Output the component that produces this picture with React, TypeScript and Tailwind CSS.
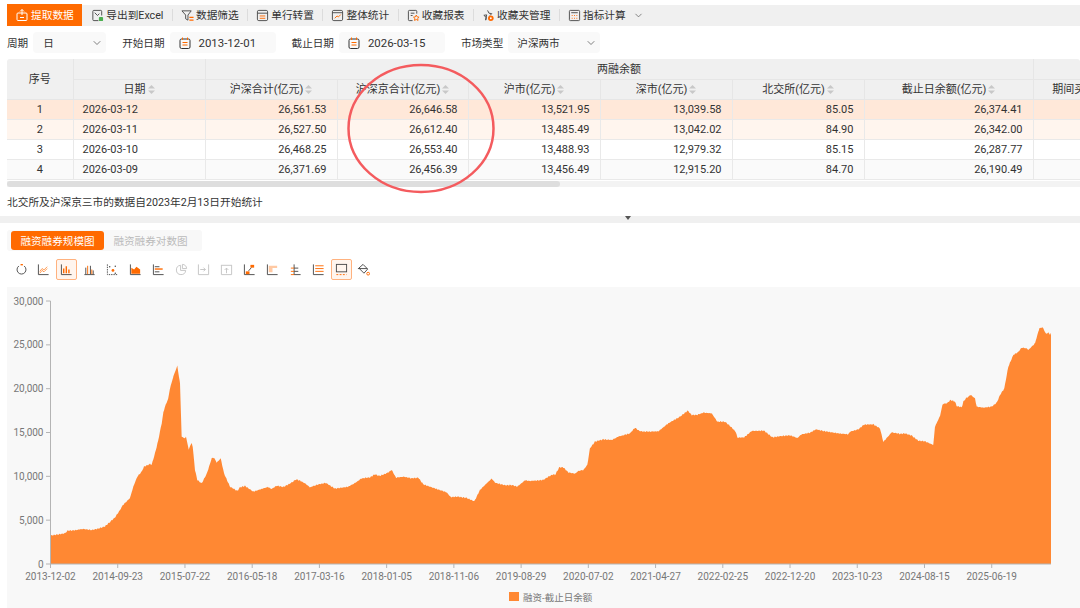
import { ChevronDown } from "lucide-react"
import type { ReactNode } from "react"

const ink = "#4a4a4a"
const acc = "#ff6a00"
const dim = "#c4c4c4"

function Ic({ children, size = 14 }: { children: ReactNode; size?: number }) {
    return (
        <svg width={size} height={size} viewBox="0 0 14 14" fill="none" strokeWidth="1" stroke={ink} className="shrink-0">
            {children}
        </svg>
    )
}

const toolbar: { label: string; icon: ReactNode }[] = [
    {
        label: "导出到Excel",
        icon: (
            <>
                <path d="M8 12.5H3a1 1 0 0 1-1-1v-9a1 1 0 0 1 1-1h7.5a1 1 0 0 1 1 1V7" />
                <path d="M4 4l3 3 2-2" />
                <rect x="8.5" y="8.5" width="4.5" height="4.5" rx="1" fill="#4caf50" stroke="none" />
            </>
        ),
    },
    {
        label: "数据筛选",
        icon: (
            <>
                <path d="M1 2h10L7.5 6.500V12L5 10.500v-4z" />
                <path d="M9 9h4.500M9 12h4.500" stroke={acc} strokeWidth="1.500" />
            </>
        ),
    },
    {
        label: "单行转置",
        icon: (
            <>
                <rect x="1.500" y="1.500" width="11" height="11" rx="1.500" />
                <path d="M1.500 4.500h11" />
                <path d="M4 7.500h6M4 10h6" stroke={acc} />
            </>
        ),
    },
    {
        label: "整体统计",
        icon: (
            <>
                <rect x="1.500" y="1.500" width="11" height="11" rx="1.500" />
                <path d="M1.500 4h11" />
                <path d="M4 10l2.500-2.500 1.500 1L10.500 6" stroke={acc} />
            </>
        ),
    },
    {
        label: "收藏报表",
        icon: (
            <>
                <path d="M6 12.500H2.500a1 1 0 0 1-1-1v-9a1 1 0 0 1 1-1h7a1 1 0 0 1 1 1V5" />
                <path d="M4 4.500h4M4 7h2" />
                <path d="M10 6.500l1 2 2 .3-1.500 1.400.4 2.100-1.900-1-1.900 1 .4-2.100L7 8.800l2-.3z" stroke={acc} />
            </>
        ),
    },
    {
        label: "收藏夹管理",
        icon: (
            <>
                <path d="M6 1.500l1.500 3 3 .5-2 2M4 12l.5-3-2.500-2.200 3-.5z" />
                <circle cx="9.500" cy="10" r="3" fill={acc} stroke="none" />
                <circle cx="9.500" cy="10" r="1" fill="#fff" stroke="none" />
            </>
        ),
    },
    {
        label: "指标计算",
        icon: (
            <>
                <rect x="1.500" y="1.500" width="11" height="11" rx="1" />
                <path d="M3.500 4h7" />
                <path d="M4 7h1M6.500 7h1M9 7h1M4 10h1M6.500 10h1M9 10h1" stroke={acc} />
            </>
        ),
    },
]

const chartIcons: { on?: boolean; icon: ReactNode }[] = [
    {
        icon: (
            <>
                <path d="M9.800 3.200A4.800 4.800 0 1 1 4.200 3.200" />
                <path d="M6 1.800h2.500" stroke={acc} strokeWidth="1.500" />
            </>
        ),
    },
    {
        icon: (
            <>
                <path d="M1.500 1.500v11h11" />
                <path d="M3 9l2.500-3 2 1.500L11 4M3 11l2.500-3 2 1.500L11 6" stroke={acc} strokeWidth=".7" />
            </>
        ),
    },
    {
        on: true,
        icon: (
            <>
                <path d="M1.500 1.500v11h11" />
                <path d="M4 11V6M6.800 11V3.500M9.600 11V7" stroke={acc} strokeWidth="1.500" />
            </>
        ),
    },
    {
        icon: (
            <>
                <path d="M1.500 12.500h11" />
                <path d="M3 12V5M8 12V3M11 12V8" stroke={ink} />
                <path d="M5 12V3M9.500 12V7" stroke={acc} />
            </>
        ),
    },
    {
        icon: (
            <>
                <path d="M1.500 1.500v11h11" strokeDasharray="1.500 1" />
                <circle cx="7.500" cy="8" r="1.500" fill={acc} stroke="none" />
                <circle cx="4" cy="4" r=".8" fill={ink} stroke="none" />
                <circle cx="10" cy="3.500" r=".8" fill={ink} stroke="none" />
                <circle cx="10" cy="11" r=".8" fill={ink} stroke="none" />
            </>
        ),
    },
    {
        icon: (
            <>
                <path d="M1.500 1.500v11h11" />
                <path d="M2.500 11.500V5l3 2 2.500-3 4 3v4.500z" fill={acc} stroke="none" />
            </>
        ),
    },
    {
        icon: (
            <>
                <path d="M1.500 1.500v11h11" />
                <path d="M3 4h5" stroke={ink} />
                <path d="M3 6.500h8.500" stroke={acc} strokeWidth="1.500" />
                <path d="M3 9.500h5" stroke={ink} />
            </>
        ),
    },
    {
        icon: (
            <>
                <path d="M6 2.500a5 5 0 1 0 5.500 5.500H6z" stroke={dim} />
                <path d="M8 1.500a4.500 4.500 0 0 1 4.500 4.500H8z" stroke={dim} />
            </>
        ),
    },
    {
        icon: (
            <>
                <path d="M1.500 1.500v11h11V1.500" stroke={dim} />
                <path d="M3.500 7H9M7 5l2 2-2 2" stroke={dim} />
            </>
        ),
    },
    {
        icon: (
            <>
                <path d="M1 2.500h12M1.500 2.500v10h11v-10" stroke={dim} />
                <path d="M7 11V5.500M5 7.500l2-2 2 2" stroke={dim} />
            </>
        ),
    },
    {
        icon: (
            <>
                <path d="M1.500 1.500v11h11" />
                <rect x="8" y="2" width="4" height="3" fill={acc} stroke="none" />
                <rect x="3" y="9" width="4" height="3" fill={acc} stroke="none" />
                <path d="M6 8.500L9 5" />
            </>
        ),
    },
    {
        icon: (
            <>
                <path d="M1.500 1.500v11h11" />
                <path d="M3 3h9v2.500H7V10H3z" fill="#ffc9a3" stroke="none" />
            </>
        ),
    },
    {
        icon: (
            <>
                <path d="M5.500 1.500v11h7M5.500 5.500H10M5.500 9H10" />
                <path d="M2 5.500h3.500M2 9h3.500M2 12.500h3.500" stroke={acc} />
            </>
        ),
    },
    {
        icon: (
            <>
                <path d="M1.500 1.500v11h11" />
                <path d="M3.500 3h9M3.500 6h9M3.500 9h9" stroke={acc} />
            </>
        ),
    },
    {
        on: true,
        icon: (
            <>
                <rect x="1.500" y="1.500" width="11" height="8" />
                <path d="M1.500 12.500h11" stroke={acc} strokeDasharray="2 1.500" />
            </>
        ),
    },
    {
        icon: (
            <>
                <path d="M6.500 1.500l5 5-4 4.500-5.500-5.500z" />
                <path d="M1 6h10" />
                <circle cx="12" cy="11.500" r="1.500" stroke={acc} />
            </>
        ),
    },
]

const columns = [66, 132, 132, 131, 132, 132, 132, 169, 132]

const headers = ["日期", "沪深合计(亿元)", "沪深京合计(亿元)", "沪市(亿元)", "深市(亿元)", "北交所(亿元)", "截止日余额(亿元)", "期间买入额(亿元)"]

const rows = [
    { bg: "bg-[#ffe8d9]", cells: ["1", "2026-03-12", "26,561.53", "26,646.58", "13,521.95", "13,039.58", "85.05", "26,374.41", ""] },
    { bg: "bg-[#fff5ee]", cells: ["2", "2026-03-11", "26,527.50", "26,612.40", "13,485.49", "13,042.02", "84.90", "26,342.00", ""] },
    { bg: "bg-white", cells: ["3", "2026-03-10", "26,468.25", "26,553.40", "13,488.93", "12,979.32", "85.15", "26,287.77", ""] },
    { bg: "bg-[#fafafa]", cells: ["4", "2026-03-09", "26,371.69", "26,456.39", "13,456.49", "12,915.20", "84.70", "26,190.49", ""] },
]

function SortIcon() {
    return (
        <svg width="7" height="9" viewBox="0 0 7 9" className="ml-[2px] shrink-0">
            <path d="M3.500 0L7 3.500H0z" fill="#c8c8c8" />
            <path d="M3.500 9L0 5.500h7z" fill="#c8c8c8" />
        </svg>
    )
}

function Field({ w, children }: { w: string; children: ReactNode }) {
    return <div className={`flex h-[21px] items-center rounded-[4px] bg-[#f9f9f9] ${w}`}>{children}</div>
}

function CalendarIcon() {
    return (
        <svg width="12" height="12" viewBox="0 0 12 12" fill="none" stroke="#333" strokeWidth="1" className="shrink-0">
            <rect x="1" y="2" width="10" height="9.500" rx="1.500" />
            <path d="M3.500 .5v2.500M8.500 .5v2.500" stroke={acc} />
            <path d="M3.500 5.500h5M3.500 8h5" stroke={acc} />
        </svg>
    )
}

// trace of the balance curve, read off 3x crops of the chart
const traceA = [[150,737],[170,734],[195,730],[203,722],[225,721],[240,718],[250,717],[275,720],[295,716],[315,709],[330,696],[345,682],[360,660],[368,646],[390,624],[400,590],[412,560],[425,545],[432,530],[450,522],[455,524],[465,490],[475,450],[485,400],[490,368],[495,350],[505,325],[510,295],[520,260],[532,227],[540,280],[545,440],[555,445],[558,440],[566,478],[575,458],[578,470],[585,540],[592,570],[605,580],[620,552],[635,505],[642,503],[650,518],[662,505],[672,550],[690,590],[712,603],[720,592],[735,588],[760,605],[790,595],[803,591],[815,597],[830,587],[850,591],[875,578],[888,568]]
const traceB = [[30,302],[45,310],[60,322],[85,313],[108,309],[135,326],[175,320],[195,309],[215,295],[240,292],[255,283],[268,288],[290,280],[305,270],[318,293],[340,290],[365,295],[385,293],[400,313],[440,327],[470,337],[482,351],[505,350],[530,354],[553,364],[570,330],[590,310],[605,296],[615,308],[645,316],[665,315],[682,320],[705,301],[720,303],[760,300],[775,290],[790,283],[795,285],[808,262],[820,262],[835,277],[855,281],[865,273],[880,270],[892,255]]
const traceC = [[0,205],[15,185],[40,178],[65,180],[85,170],[120,160],[135,143],[148,153],[165,155],[205,154],[235,130],[270,110],[293,92],[305,105],[320,105],[340,98],[365,100],[382,125],[405,125],[420,138],[437,155],[442,173],[463,172],[485,153],[522,152],[547,172],[575,168],[600,166],[622,174],[635,163],[660,158],[678,148],[700,153],[745,160],[775,163],[780,155],[805,148],[822,134],[850,133],[870,145],[880,186],[905,157]]
const traceD = [[62,372],[75,370],[95,377],[115,392],[135,394],[160,405],[165,350],[180,318],[188,282],[200,280],[212,270],[225,275],[230,288],[245,292],[250,275],[258,265],[272,255],[285,265],[290,290],[310,293],[335,290],[350,278],[360,255],[373,235],[385,170],[400,135],[415,126],[425,113],[440,115],[445,120],[465,100],[478,55],[488,52],[498,72],[505,68],[510,73],[513,70]]

const toPage = (pts: number[][], ox: number, oy: number) => pts.map(([x, y]) => [ox + x / 3, oy + y / 3])

const curve = [
    ...toPage(traceA, 0, 290),
    ...toPage(traceB, 290, 380),
    ...toPage(traceC, 590, 380),
    ...toPage(traceD, 880, 310),
]

// daily data is jagged, so fill in between the traced points with a little wobble
const dense: string[] = []
curve.forEach(([x, y], i) => {
    const next = curve[i + 1]
    if (!next) {
        dense.push(`${x.toFixed(1)},${y.toFixed(1)}`)
        return
    }
    for (let px = x; px < next[0]; px += 0.8) {
        const py = y + ((next[1] - y) * (px - x)) / (next[0] - x)
        const wobble = Math.sin(px * 2.3) * 0.35 + Math.sin(px * 5.1) * 0.25
        dense.push(`${px.toFixed(1)},${(py + wobble).toFixed(1)}`)
    }
})

const area = ["50.5,564", ...dense, "1051,564"].join(" ")

const xLabels = ["2013-12-02", "2014-09-23", "2015-07-22", "2016-05-18", "2017-03-16", "2018-01-05", "2018-11-06", "2019-08-29", "2020-07-02", "2021-04-27", "2022-02-25", "2022-12-20", "2023-10-23", "2024-08-15", "2025-06-19"]
const yLabels = ["0", "5,000", "10,000", "15,000", "20,000", "25,000", "30,000"]

function Chart() {
    return (
        <svg width="1073" height="321" viewBox="7 287 1073 321" className="block" fontFamily="Roboto, 'Noto Sans CJK SC', sans-serif">
            <polygon points={area} fill="#ff8833" />
            <path d="M50.500 301V564H1051" stroke="#b4b4b4" fill="none" />
            {yLabels.map((label, i) => {
                const y = 564 - i * 43.83
                return (
                    <g key={label}>
                        <path d={`M46 ${y}H50.500`} stroke="#b4b4b4" />
                        <text x="43.500" y={y + 3.500} textAnchor="end" fontSize="10" fill="#777">
                            {label}
                        </text>
                    </g>
                )
            })}
            {xLabels.map((label, i) => {
                const x = 50.5 + i * 67.23
                return (
                    <g key={label}>
                        <path d={`M${x} 564V568`} stroke="#b4b4b4" />
                        <text x={x} y="580" textAnchor="middle" fontSize="10" fill="#777">
                            {label}
                        </text>
                    </g>
                )
            })}
            <rect x="509" y="592" width="10" height="9" fill="#ff8833" />
            <text x="523" y="600.500" fontSize="9.500" fill="#777">
                融资-截止日余额
            </text>
        </svg>
    )
}

export default function App() {
    return (
        <div className="relative h-[608px] w-[1080px] overflow-hidden bg-white font-['Roboto','Noto_Sans_CJK_SC',sans-serif] text-[11px] text-[#333]">
            {/* Toolbar */}
            <div className="flex pt-1 pl-[7px] text-[10.700px]">
                <div className="flex h-[22px] w-[75px] items-center gap-[3px] bg-[#ff6a00] pl-[9px] text-white">
                    <svg width="12" height="12" viewBox="0 0 12 12" fill="none" stroke="#fff" strokeWidth="1">
                        <rect x="1" y="4" width="10" height="7.500" rx="1" />
                        <path d="M6 .5v5.500M4 2.500L6 .5l2 2M4 8.500h4" />
                    </svg>
                    <span className="pt-[2px]">提取数据</span>
                </div>
                <div className="mt-px flex h-[21px] flex-1 items-center bg-[#f0f0f0] pl-px">
                    {toolbar.map((item, i) => (
                        <div key={item.label} className="flex items-center">
                            <div className="flex items-center gap-[2px] px-[8.250px] whitespace-nowrap">
                                <Ic size={13}>{item.icon}</Ic>
                                <span className="pt-[2px]">{item.label}</span>
                            </div>
                            {i < toolbar.length - 1 && <div className="h-3 w-px bg-[#dcdcdc]" />}
                        </div>
                    ))}
                    <ChevronDown size={11} strokeWidth={1.5} className="-ml-px text-[#555]" />
                </div>
            </div>

            {/* Filters */}
            <div className="mt-[6px] flex items-center pl-[7px] text-[10.600px]">
                <span className="mr-[5px] pt-[3px]">周期</span>
                <Field w="w-[73px] justify-between pl-[10px] pr-[3px]">
                    <span className="pt-[3px]">日</span>
                    <ChevronDown size={12} strokeWidth={1.5} className="text-[#555]" />
                </Field>
                <span className="mr-[5px] ml-4 pt-[3px]">开始日期</span>
                <Field w="w-[106px] gap-2 pl-[9px]">
                    <CalendarIcon />
                    <span className="pt-[3px] text-[11.400px]">2013-12-01</span>
                </Field>
                <span className="mr-[5px] ml-4 pt-[3px]">截止日期</span>
                <Field w="w-[106px] gap-2 pl-[9px]">
                    <CalendarIcon />
                    <span className="pt-[3px] text-[11.400px]">2026-03-15</span>
                </Field>
                <span className="mr-[5px] ml-4 pt-[3px]">市场类型</span>
                <Field w="w-[92px] justify-between pl-[9px] pr-[3px]">
                    <span className="pt-[3px]">沪深两市</span>
                    <ChevronDown size={12} strokeWidth={1.5} className="text-[#555]" />
                </Field>
            </div>

            {/* Table */}
            <div className="mt-[6px] ml-[7px] w-[1073px] overflow-hidden rounded-t-[3px]">
                <table className="w-[1158px] table-fixed border-collapse">
                    <colgroup>
                        {columns.map((w, i) => (
                            <col key={i} style={{ width: w }} />
                        ))}
                    </colgroup>
                    <thead className="bg-[#f0f0f0] font-normal">
                        <tr className="h-5">
                            <th rowSpan={2} className="border border-t-0 border-l-0 border-[#e6e6e6] p-0 pt-[3px] font-normal">
                                序号
                            </th>
                            <th className="border border-t-0 border-[#e6e6e6] p-0" />
                            <th colSpan={6} className="border border-t-0 border-[#e6e6e6] p-0 pt-[3px] leading-[16px] font-normal">
                                两融余额
                            </th>
                            <th colSpan={2} className="border border-t-0 border-[#e6e6e6] p-0" />
                        </tr>
                        <tr className="h-5">
                            {headers.map((label) => (
                                <th key={label} className="border border-[#e6e6e6] p-0 font-normal">
                                    <span className="flex items-center justify-center">
                                        <span className="pt-[2px] leading-[16px]">{label}</span>
                                        <SortIcon />
                                    </span>
                                </th>
                            ))}
                        </tr>
                    </thead>
                    <tbody>
                        {rows.map((row) => (
                            <tr key={row.cells[0]} className={`h-5 ${row.bg}`}>
                                {row.cells.map((cell, i) => (
                                    <td
                                        key={i}
                                        className={`border border-[#e9e9e9] pt-px pb-0 leading-none ${
                                            i === 0 ? "border-l-0 text-center" : i === 1 ? "pl-[9px] text-left" : "pr-[10px] text-right"
                                        }`}
                                    >
                                        {cell}
                                    </td>
                                ))}
                            </tr>
                        ))}
                    </tbody>
                </table>
                <div className="mt-px h-[6px] bg-[#f3f3f3]">
                    <div className="h-full w-[553px] rounded-full bg-[#dedede]" />
                </div>
            </div>

            <p className="mt-[9px] ml-[7px] text-[10.700px] leading-[14px]">北交所及沪深京三市的数据自2023年2月13日开始统计</p>

            {/* Divider */}
            <div className="mt-[6px] flex h-[7px] justify-center bg-[#f0f0f0] pl-[176px]">
                <div className="h-0 w-0 border-x-[3px] border-t-[4px] border-x-transparent border-t-[#555]" />
            </div>

            {/* Tabs */}
            <div className="mt-[7px] ml-[7px] flex h-[21px] w-[195px] items-center rounded-[3px] bg-[#f8f8f8] pl-1 text-[10.600px]">
                <div className="flex h-[19px] w-[93px] items-center justify-center rounded-[3px] bg-[#ff6a00] pt-[4px] text-white">融资融券规模图</div>
                <div className="flex h-[19px] w-[93px] items-center justify-center pt-[4px] text-[#bbb]">融资融券对数图</div>
            </div>

            {/* Chart types */}
            <div className="mt-2 ml-[10.500px] flex gap-[1.870px]">
                {chartIcons.map((c, i) => (
                    <div
                        key={i}
                        className={`flex h-[21px] w-[21px] items-center justify-center rounded-[2px] border ${
                            c.on ? "border-[#ffb27f] bg-[#fff5ee]" : "border-transparent"
                        }`}
                    >
                        <Ic size={13}>{c.icon}</Ic>
                    </div>
                ))}
            </div>

            <div className="mt-[7px] ml-[7px] bg-[#f8f8f8]">
                <Chart />
            </div>

            {/* Hand-drawn annotation over the table */}
            <svg width="160" height="140" viewBox="340 60 160 140" className="absolute top-[60px] left-[340px]" fill="none">
                <ellipse cx="421" cy="128.500" rx="72.500" ry="63.500" stroke="#f45b5e" strokeWidth="2.500" />
            </svg>
        </div>
    )
}
